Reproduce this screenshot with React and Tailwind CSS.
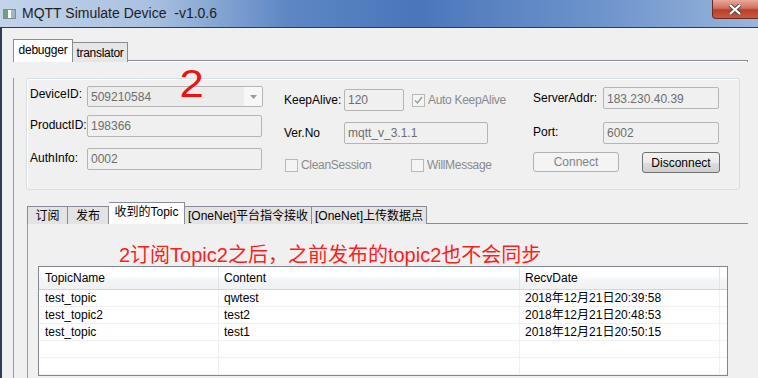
import React from "react";

const font = { fontFamily: '"Liberation Sans", "Noto Sans CJK SC", sans-serif' };

function Field({ value, className = "" }) {
  return (
    <div className={`h-[22px] shrink-0 border border-[#b5b5b5] rounded-[2px] bg-[#f0f0f0] px-[3px] flex items-center text-[12px] text-[#6d6d6d] ${className}`}>
      {value}
    </div>
  );
}

function Check({ label, checked }) {
  return (
    <div className="flex items-center gap-[3px] text-[12px] tracking-[-0.3px] text-[#8a8a8a] whitespace-nowrap">
      <div className="w-[13px] h-[13px] shrink-0 border border-[#b9b9b9] bg-[#f4f4f4] flex items-center justify-center">
        {checked && (
          <svg width="9" height="9" viewBox="0 0 9 9">
            <path d="M1 4.5 L3.5 7 L8 1" fill="none" stroke="#9a9a9a" strokeWidth="1.4" />
          </svg>
        )}
      </div>
      <span>{label}</span>
    </div>
  );
}

const rows = [
  ["test_topic", "qwtest", "2018年12月21日20:39:58"],
  ["test_topic2", "test2", "2018年12月21日20:48:53"],
  ["test_topic", "test1", "2018年12月21日20:50:15"],
  ["", "", ""],
  ["", "", ""],
];

export default function App() {
  return (
    <div className="relative w-[758px] h-[378px] overflow-hidden bg-[#f0f0f0] text-black" style={font}>
      {/* title bar */}
      <div className="h-[27px] flex items-center relative bg-[linear-gradient(90deg,#c3d4ea_0%,#a9c1e0_20%,#5d87c4_38%,#4a76ba_55%,#6f95cc_80%,#98b5dc_100%)]">
        <div className="ml-[3px] mt-[1px] w-[13px] h-[10px] border border-[#7d8b97] bg-[#e8eef2] flex">
          <div className="w-[4px] bg-[#6f9f80]" />
          <div className="w-[3px] bg-[#ffffff]" />
          <div className="flex-1 bg-[#9fb8c8]" />
        </div>
        <span className="ml-[6px] text-[14px] text-[#1d1d1d] whitespace-pre">MQTT Simulate Device  -v1.0.6</span>
        <div className="absolute right-[-6px] top-0 w-[52px] h-[19px] rounded-bl-[4px] border border-[#6b2a22] border-t-0 bg-[linear-gradient(180deg,#e9a99b_0%,#d0705c_45%,#b8402a_55%,#c85a3e_100%)] flex items-center justify-center">
          <svg width="14" height="11" viewBox="0 0 14 11" className="mr-[6px]">
            <path d="M2 1 L12 10 M12 1 L2 10" stroke="#4a4a4a" strokeWidth="4" />
            <path d="M2 1 L12 10 M12 1 L2 10" stroke="#ffffff" strokeWidth="2.2" />
          </svg>
        </div>
      </div>

      {/* window body */}
      <div className="h-[351px] border-t border-l-2 border-[#2e3d57] pt-[11px] pl-[11px]">
        {/* outer tabs */}
        <div className="flex items-end h-[23px]">
          <div className="h-[23px] w-[60px] bg-white border border-[#898c95] border-b-0 text-[12px] flex items-center justify-center pb-[2px] tracking-[-0.2px]">debugger</div>
          <div className="h-[20px] w-[55px] bg-[#e6e6e6] border border-[#898c95] border-b-0 border-l-0 text-[12px] flex items-center justify-center tracking-[-0.3px]">translator</div>
          <div className="flex-1 mr-[10px] h-[2px] border-t border-[#898c95] bg-white border-r" />
        </div>
        <div className="border-l border-[#9a9a9a] h-[330px] mr-[10px] relative">
          {/* group box */}
          <div className="ml-[12px] mt-[16px] w-[714px] h-[112px] border border-[#d5dfe5] rounded-[3px] shadow-[inset_1px_1px_0_#ffffff] flex pt-[7px]">
            {/* col 1 */}
            <div className="flex flex-col w-[236px] shrink-0 pl-[3px]">
              <div className="flex">
                <span className="w-[57px] text-[12px] -mt-[1px]">DeviceID:</span>
                <div className="w-[176px] h-[21px] border border-[#b5b5b5] rounded-[2px] bg-[#ececec] flex items-center text-[12px] text-[#6d6d6d]">
                  <span className="flex-1 pl-[3px]">509210584</span>
                  <div className="w-[18px] h-full bg-[#f7f7f7] flex items-center justify-center">
                    <svg width="7" height="4" viewBox="0 0 7 4"><path d="M0 0 H7 L3.5 4 Z" fill="#9a9a9a" /></svg>
                  </div>
                </div>
              </div>
              <div className="flex mt-[8px]">
                <span className="w-[57px] text-[12px] mt-[1px]">ProductID:</span>
                <Field value="198366" className="w-[175px]" />
              </div>
              <div className="flex mt-[11px]">
                <span className="w-[57px] text-[12px] mt-[1px]">AuthInfo:</span>
                <Field value="0002" className="w-[175px]" />
              </div>
            </div>
            {/* col 2 */}
            <div className="flex flex-col w-[270px] shrink-0 pl-[21px] pt-[3px]">
              <div className="flex items-center">
                <span className="w-[60px] shrink-0 text-[12px]">KeepAlive:</span>
                <Field value="120" className="w-[60px]" />
                <div className="ml-[8px]">
                  <Check label="Auto KeepAlive" checked />
                </div>
              </div>
              <div className="flex items-center mt-[11px]">
                <span className="w-[60px] shrink-0 text-[12px]">Ver.No</span>
                <Field value="mqtt_v_3.1.1" className="w-[144px]" />
              </div>
              <div className="flex items-center mt-[12px]">
                <div className="w-[127px] pl-[1px]"><Check label="CleanSession" /></div>
                <Check label="WillMessage" />
              </div>
            </div>
            {/* col 3 */}
            <div className="flex flex-col w-[200px] shrink-0 pt-[1px]">
              <div className="flex items-center">
                <span className="w-[70px] shrink-0 text-[12px]">ServerAddr:</span>
                <Field value="183.230.40.39" className="w-[116px] items-start pt-[2px]" />
              </div>
              <div className="flex mt-[13px]">
                <span className="w-[70px] shrink-0 text-[12px] mt-[1px]">Port:</span>
                <Field value="6002" className="w-[116px]" />
              </div>
              <div className="flex mt-[8px]">
                <div className="w-[86px] h-[20px] border border-[#adb2b5] rounded-[3px] bg-[#f4f4f4] text-[12px] text-[#838383] flex items-center justify-center">Connect</div>
                <div className="ml-[23px] w-[78px] h-[21px] border border-[#707070] rounded-[3px] bg-[linear-gradient(180deg,#f2f2f2_0%,#ebebeb_50%,#dddddd_51%,#cfcfcf_100%)] text-[12px] flex items-center justify-center">Disconnect</div>
              </div>
            </div>
          </div>

          {/* inner tabs */}
          <div className="ml-[13px] mt-[12px] flex items-end h-[22px]">
            <div className="h-[18px] w-[41px] bg-[#e3e3e3] border border-[#898c95] border-b-0 text-[12px] flex items-center justify-center">订阅</div>
            <div className="h-[18px] w-[41px] bg-[#e3e3e3] border border-[#898c95] border-b-0 border-l-0 text-[12px] flex items-center justify-center">发布</div>
            <div className="h-[22px] w-[76px] bg-white border border-[#898c95] border-b-0 border-l-0 text-[12px] flex items-center justify-center pb-[3px]">收到的Topic</div>
            <div className="h-[18px] w-[127px] bg-[#e3e3e3] border border-[#898c95] border-b-0 border-l-0 text-[12px] flex items-center justify-center">[OneNet]平台指令接收</div>
            <div className="h-[18px] w-[115px] bg-[#e3e3e3] border border-[#898c95] border-b-0 border-l-0 text-[12px] flex items-center justify-center">[OneNet]上传数据点</div>
            <div className="flex-1 border-t border-[#898c95]" />
          </div>
          <div className="ml-[13px] border-l border-[#9a9a9a] h-[160px] pt-[20px]">
            <div className="pl-[91px] text-[20px] leading-[22px] text-[#ff1c1c] whitespace-nowrap">2订阅Topic2之后，之前发布的topic2也不会同步</div>
            {/* table */}
            <div className="ml-[10px] w-[690px] border border-[#828790] bg-white">
              <div className="flex h-[23px] border-b border-[#d5d5d5] bg-[linear-gradient(180deg,#ffffff_0%,#ffffff_40%,#f3f4f6_60%,#f1f2f4_100%)] text-[12px]">
                <div className="w-[180px] border-r border-[#e3e4e6] pl-[6px] flex items-center">TopicName</div>
                <div className="w-[301px] border-r border-[#e3e4e6] pl-[5px] flex items-center">Content</div>
                <div className="w-[200px] border-r border-[#e3e4e6] pl-[5px] flex items-center">RecvDate</div>
                <div className="flex-1" />
              </div>
              {rows.map((r, i) => (
                <div key={i} className="flex h-[17px] border-b border-[#f0f0f0] text-[12px]">
                  <div className="w-[180px] border-r border-[#f0f0f0] pl-[6px] flex items-center">{r[0]}</div>
                  <div className="w-[301px] border-r border-[#f0f0f0] pl-[5px] flex items-center">{r[1]}</div>
                  <div className="w-[200px] border-r border-[#f0f0f0] pl-[5px] flex items-center">{r[2]}</div>
                  <div className="flex-1" />
                </div>
              ))}
            </div>
          </div>

          {/* handwritten annotation */}
          <div className="absolute left-[167px] top-[-13px] text-[38px] leading-[38px] text-[#f01010] font-normal scale-x-[1.15]">2</div>
        </div>
      </div>
    </div>
  );
}
